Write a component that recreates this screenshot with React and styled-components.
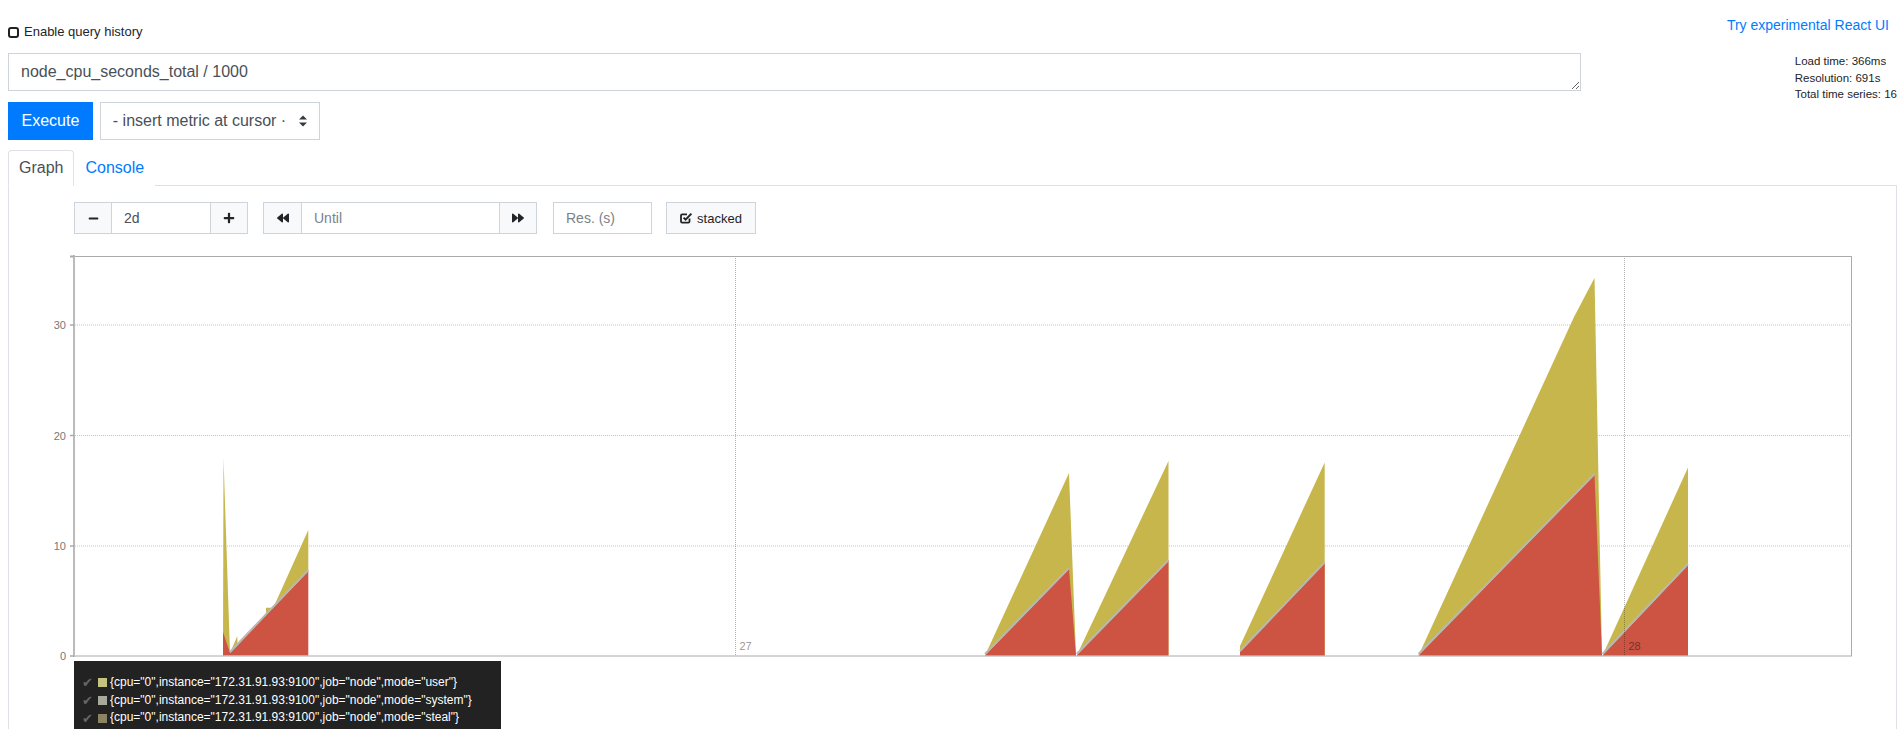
import React from "react";
import styled, { createGlobalStyle } from "styled-components";
import { FaMinus, FaPlus, FaBackward, FaForward } from "react-icons/fa";

const GlobalStyle = createGlobalStyle`
  html, body {
    margin: 0;
    padding: 0;
    overflow: hidden;
    background: #fff;
  }
  body {
    font-family: "Liberation Sans", Arial, sans-serif;
    color: #212529;
  }
  * {
    box-sizing: border-box;
  }
`;

const Page = styled.div`
  width: 1900px;
  padding: 0 3px 0 8px;
`;

const TopBar = styled.div`
  display: flex;
  justify-content: space-between;
  align-items: flex-start;
  height: 53px;
  padding-top: 15px;
`;

const HistoryLabel = styled.label`
  display: flex;
  align-items: center;
  margin-top: 8px;
  font-size: 13px;
  line-height: 18px;
  color: #212529;
`;

const HistoryCheck = styled.input`
  appearance: none;
  width: 11px;
  height: 11px;
  margin: 0 5px 0 0;
  border: 2px solid #222;
  border-radius: 3px;
  background: #fff;
`;

const ReactLink = styled.a`
  margin-right: 8px;
  font-size: 14px;
  line-height: 20px;
  color: #007bff;
  text-decoration: none;
`;

const QueryRow = styled.div`
  display: flex;
  align-items: flex-start;
`;

const QueryColumn = styled.div`
  display: flex;
  flex-direction: column;
  width: 1573px;
`;

const QueryInput = styled.textarea`
  width: 100%;
  height: 38px;
  margin: 0;
  padding: 6px 12px;
  border: 1px solid #ced4da;
  border-radius: 0;
  font-family: "Liberation Sans", Arial, sans-serif;
  font-size: 16px;
  line-height: 24px;
  color: #495057;
  outline: none;
  display: block;
`;

const ActionRow = styled.div`
  display: flex;
  gap: 7px;
  margin-top: 11px;
`;

const ExecuteButton = styled.button`
  height: 38px;
  padding: 0 13.5px;
  border: none;
  border-radius: 0;
  background: #007bff;
  color: #fff;
  font-family: "Liberation Sans", Arial, sans-serif;
  font-size: 16px;
`;

const MetricSelect = styled.div`
  display: flex;
  align-items: center;
  justify-content: space-between;
  width: 220px;
  height: 38px;
  padding: 0 12px;
  border: 1px solid #ced4da;
  font-size: 16px;
  color: #495057;
  white-space: nowrap;
`;

const Stats = styled.div`
  margin-left: auto;
  font-size: 11.5px;
  line-height: 16.5px;
  color: #212529;
  white-space: nowrap;
`;

const TabNav = styled.div`
  display: flex;
  height: 36px;
  margin-top: 10px;
  border-bottom: 1px solid #dee2e6;
`;

const Tab = styled.div`
  height: 36px;
  padding: 0 10px;
  border: 1px solid ${(p) => (p.$active ? "#dee2e6" : "transparent")};
  border-bottom-color: ${(p) => (p.$active ? "#fff" : "transparent")};
  border-radius: 4px 4px 0 0;
  background: #fff;
  font-size: 16px;
  line-height: 34px;
  color: ${(p) => (p.$active ? "#495057" : "#007bff")};
`;

const Panel = styled.div`
  height: 560px;
  padding-top: 16px;
  border: 1px solid #dee2e6;
  border-top: none;
`;

const Controls = styled.div`
  display: flex;
  align-items: center;
  height: 32px;
  padding-left: 65px;
`;

const InputGroup = styled.div`
  display: flex;
  margin-right: ${(p) => p.$gap || 0}px;

  & > * + * {
    margin-left: -1px;
  }
`;

const AddonButton = styled.div`
  display: flex;
  align-items: center;
  justify-content: center;
  width: ${(p) => p.$w || 38}px;
  height: 32px;
  border: 1px solid #ced4da;
  background: #f8f9fa;
  color: #212529;
  font-size: 13px;
  gap: 4px;
`;

const Field = styled.div`
  display: flex;
  align-items: center;
  width: ${(p) => p.$w}px;
  height: 32px;
  padding: 0 12px;
  border: 1px solid #ced4da;
  background: #fff;
  font-size: 14px;
  color: ${(p) => (p.$placeholder ? "#7b8288" : "#495057")};
`;

const ChartSvg = styled.svg`
  display: block;
  margin-top: 12px;
`;

const Legend = styled.div`
  display: inline-block;
  margin-left: 65px;
  padding: 13px 29px 20px 8px;
  background: #222;
  color: #fff;
  font-size: 12px;
  line-height: 17.7px;
`;

const LegendRow = styled.div`
  display: flex;
  align-items: center;
  white-space: nowrap;
`;

const LegendCheck = styled.span`
  width: 13px;
  margin-right: 3px;
  color: #666;
  font-family: "DejaVu Sans", sans-serif;
  font-size: 13px;
  line-height: 17px;
`;

const Swatch = styled.span`
  width: 9px;
  height: 9px;
  margin-right: 3px;
  background: ${(p) => p.$color};
`;

const SelectArrows = () => (
  <svg width="8" height="12" viewBox="0 0 8 12">
    <path d="M0 4.5 L4 0.5 L8 4.5 Z M0 7.5 L4 11.5 L8 7.5 Z" fill="#343a40" />
  </svg>
);

const StackedIcon = () => (
  <svg width="13" height="12" viewBox="0 0 13 12">
    <path
      d="M9.5 6.5 V9.5 a1.2 1.2 0 0 1 -1.2 1.2 H2.2 a1.2 1.2 0 0 1 -1.2 -1.2 V3.5 a1.2 1.2 0 0 1 1.2 -1.2 H7"
      fill="none"
      stroke="#212529"
      strokeWidth="1.8"
    />
    <path d="M3.6 5.6 L5.6 7.6 L11.4 1.6" fill="none" stroke="#212529" strokeWidth="2" />
  </svg>
);

// chart geometry, in page coordinates
const yTicks = [
  { v: "30", y: 325 },
  { v: "20", y: 435.5 },
  { v: "10", y: 546 },
  { v: "0", y: 656 },
];

const xTicks = [
  { v: "27", x: 735.5 },
  { v: "28", x: 1624.5 },
];

const userAreas = [
  "223,655.5 223.5,458 230,653",
  "230,653 237.3,636 237.5,645",
  "266,615.5 266,607.7 273.3,607.7 308.3,530 308.3,571",
  "985,655.5 1069,473 1076,655.5",
  "1076.7,655.5 1168.5,461 1168.5,655.5",
  "1240,655.5 1240,646 1324.7,462.4 1324.7,655.5",
  "1418.5,655.5 1574,317 1594.5,278 1602,655.5",
  "1602.5,655.5 1688,467.5 1688,655.5",
];

const stealAreas = [
  "223,655.5 223,632 230,653 230,655.5",
  "230,655.5 230,653 308.3,571 308.3,655.5",
  "985,655.5 1069,569 1076,655.5",
  "1076.7,655.5 1168.5,561 1168.5,655.5",
  "1240,655.5 1240,652 1324.7,563.3 1324.7,655.5",
  "1418.5,655.5 1594.5,475 1602,655.5",
  "1602.5,655.5 1688,565 1688,655.5",
];

const systemLines = [
  "230,653 308.3,571",
  "985,655 1069,569",
  "1076.7,655 1168.5,561",
  "1240,652 1324.7,563.3",
  "1418.5,655 1594.5,475",
  "1602.5,655 1688,565",
];

const Chart = () => (
  <ChartSvg width="1887" height="415" viewBox="9 246 1887 415">
    {yTicks.slice(0, 3).map((t) => (
      <line key={t.v} x1="75" x2="1851" y1={t.y} y2={t.y} stroke="#c4c4c4" strokeDasharray="1 1" />
    ))}
    {userAreas.map((p) => (
      <polygon key={p} points={p} fill="#c7b64b" />
    ))}
    {stealAreas.map((p) => (
      <polygon key={p} points={p} fill="#cd5343" />
    ))}
    {systemLines.map((p) => (
      <polyline key={p} points={p} fill="none" stroke="#b8b8b2" strokeWidth="2" transform="translate(0,-1)" />
    ))}
    {xTicks.map((t) => (
      <g key={t.v}>
        <line x1={t.x} x2={t.x} y1="256" y2="656" stroke="rgba(0,0,0,0.3)" strokeDasharray="1 1" />
        <text x={t.x + 4} y="650" fontSize="11" fill="rgba(0,0,0,0.45)" fontFamily="Liberation Sans, Arial, sans-serif">
          {t.v}
        </text>
      </g>
    ))}
    <line x1="74" x2="1852" y1="256.5" y2="256.5" stroke="#aaa" />
    <line x1="1851.5" x2="1851.5" y1="256" y2="656" stroke="#aaa" />
    <line x1="74" x2="1852" y1="656" y2="656" stroke="#aaa" />
    <line x1="74" x2="74" y1="255" y2="657" stroke="#bbb" strokeWidth="2" />
    <line x1="70" x2="74" y1="256.5" y2="256.5" stroke="#aaa" strokeWidth="2" />
    {yTicks.map((t) => (
      <g key={t.v}>
        <line x1="70" x2="74" y1={t.y} y2={t.y} stroke="#aaa" strokeWidth="1.5" />
        <text
          x="66"
          y={t.y + 4}
          textAnchor="end"
          fontSize="11"
          fill="#777"
          fontFamily="Liberation Sans, Arial, sans-serif"
        >
          {t.v}
        </text>
      </g>
    ))}
  </ChartSvg>
);

const series = [
  { mode: "user", color: "#c6c27f" },
  { mode: "system", color: "#a7a99a" },
  { mode: "steal", color: "#8a8463" },
];

export default function App() {
  return (
    <>
      <GlobalStyle />
      <Page>
        <TopBar>
          <HistoryLabel>
            <HistoryCheck type="checkbox" />
            Enable query history
          </HistoryLabel>
          <ReactLink href="#">Try experimental React UI</ReactLink>
        </TopBar>

        <QueryRow>
          <QueryColumn>
            <QueryInput defaultValue="node_cpu_seconds_total / 1000" spellCheck={false} />
            <ActionRow>
              <ExecuteButton>Execute</ExecuteButton>
              <MetricSelect>
                <span>- insert metric at cursor ·</span>
                <SelectArrows />
              </MetricSelect>
            </ActionRow>
          </QueryColumn>
          <Stats>
            <div>Load time: 366ms</div>
            <div>Resolution: 691s</div>
            <div>Total time series: 16</div>
          </Stats>
        </QueryRow>

        <TabNav>
          <Tab $active>Graph</Tab>
          <Tab>Console</Tab>
        </TabNav>

        <Panel>
          <Controls>
            <InputGroup $gap={15}>
              <AddonButton $w={38}>
                <FaMinus size={11} />
              </AddonButton>
              <Field $w={100}>2d</Field>
              <AddonButton $w={38}>
                <FaPlus size={12} />
              </AddonButton>
            </InputGroup>
            <InputGroup $gap={16}>
              <AddonButton $w={39}>
                <FaBackward size={12} />
              </AddonButton>
              <Field $w={199} $placeholder>
                Until
              </Field>
              <AddonButton $w={38}>
                <FaForward size={12} />
              </AddonButton>
            </InputGroup>
            <InputGroup $gap={14}>
              <Field $w={99} $placeholder>
                Res. (s)
              </Field>
            </InputGroup>
            <AddonButton $w={90}>
              <StackedIcon />
              stacked
            </AddonButton>
          </Controls>

          <Chart />

          <Legend>
            {series.map((s) => (
              <LegendRow key={s.mode}>
                <LegendCheck>✔</LegendCheck>
                <Swatch $color={s.color} />
                {`{cpu="0",instance="172.31.91.93:9100",job="node",mode="${s.mode}"}`}
              </LegendRow>
            ))}
          </Legend>
        </Panel>
      </Page>
    </>
  );
}
